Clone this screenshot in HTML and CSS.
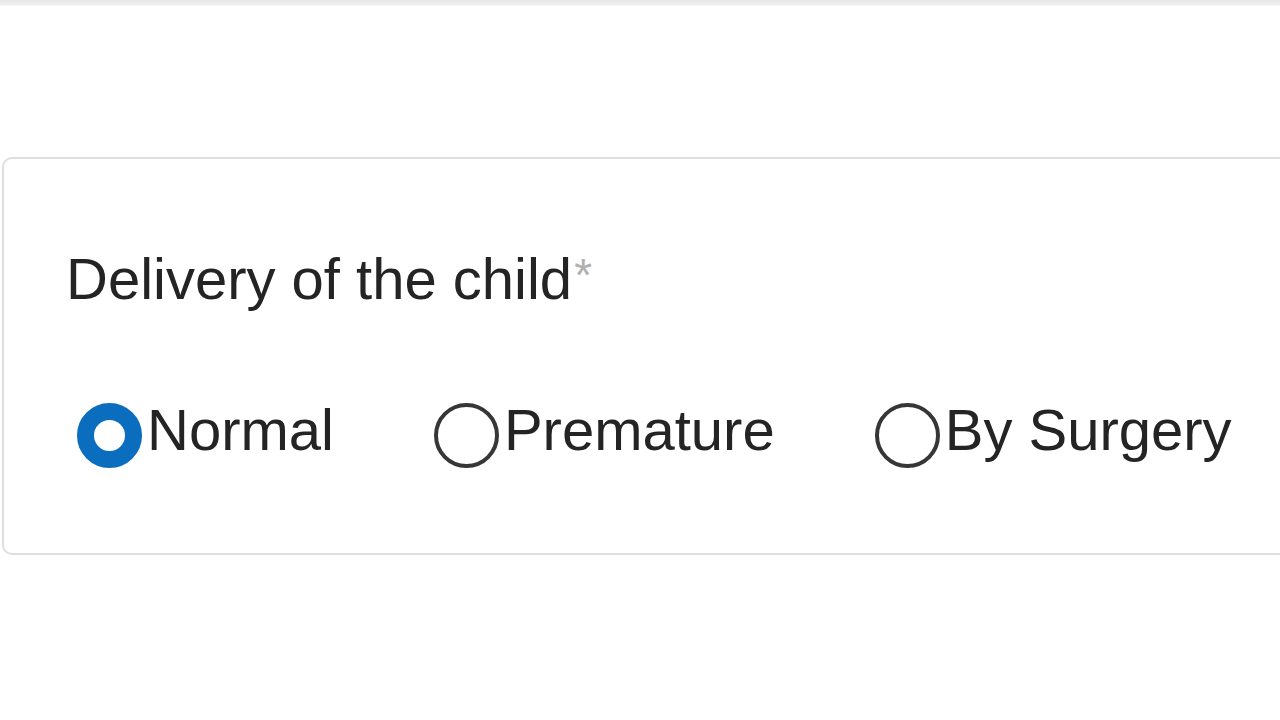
FILE: index.html
```html
<!DOCTYPE html>
<html lang="en">
<head>
<meta charset="utf-8">
<title>Delivery of the child</title>
<link rel="stylesheet" href="styles.css">
</head>
<body>
<div class="topbar"></div>
<section class="card">
  <div class="question">Delivery of the child<span class="req">*</span></div>
  <div class="options">
    <label class="option">
      <span class="radio checked"></span>
      <span class="opt-text">Normal</span>
    </label>
    <label class="option">
      <span class="radio"></span>
      <span class="opt-text">Premature</span>
    </label>
    <label class="option">
      <span class="radio"></span>
      <span class="opt-text">By Surgery</span>
    </label>
  </div>
</section>
</body>
</html>
```

FILE: styles.css
```css
html, body {
  margin: 0;
  padding: 0;
  background: #ffffff;
}

body {
  width: 1280px;
  height: 720px;
  overflow: hidden;
  font-family: "Liberation Sans", Arial, sans-serif;
  color: #242424;
}

.topbar {
  height: 6px;
  background: linear-gradient(#e6e6e6, #efefef 70%, #fafafa);
}

.card {
  margin: 151px -40px 0 2px;
  border: 2px solid #dedede;
  border-radius: 10px;
  padding: 87px 0 85px 62px;
  background: #fff;
}

.question {
  font-size: 58px;
  line-height: 66px;
  white-space: nowrap;
}

.req {
  color: #b0b0b0;
  font-size: 46px;
  line-height: 0;
  vertical-align: 8px;
  margin-left: 2px;
}

.options {
  display: flex;
  align-items: flex-start;
  gap: 100px;
  margin: 85px 0 0 11px;
}

.option {
  display: flex;
  align-items: flex-start;
  gap: 5px;
}

.radio {
  box-sizing: border-box;
  width: 65px;
  height: 65px;
  margin-top: 6px;
  border-radius: 50%;
  border: 4px solid #363636;
  background: #fff;
  flex: none;
}

.radio.checked {
  border: 17px solid #0b6dbd;
}

.opt-text {
  font-size: 58px;
  line-height: 66px;
  white-space: nowrap;
}
```
